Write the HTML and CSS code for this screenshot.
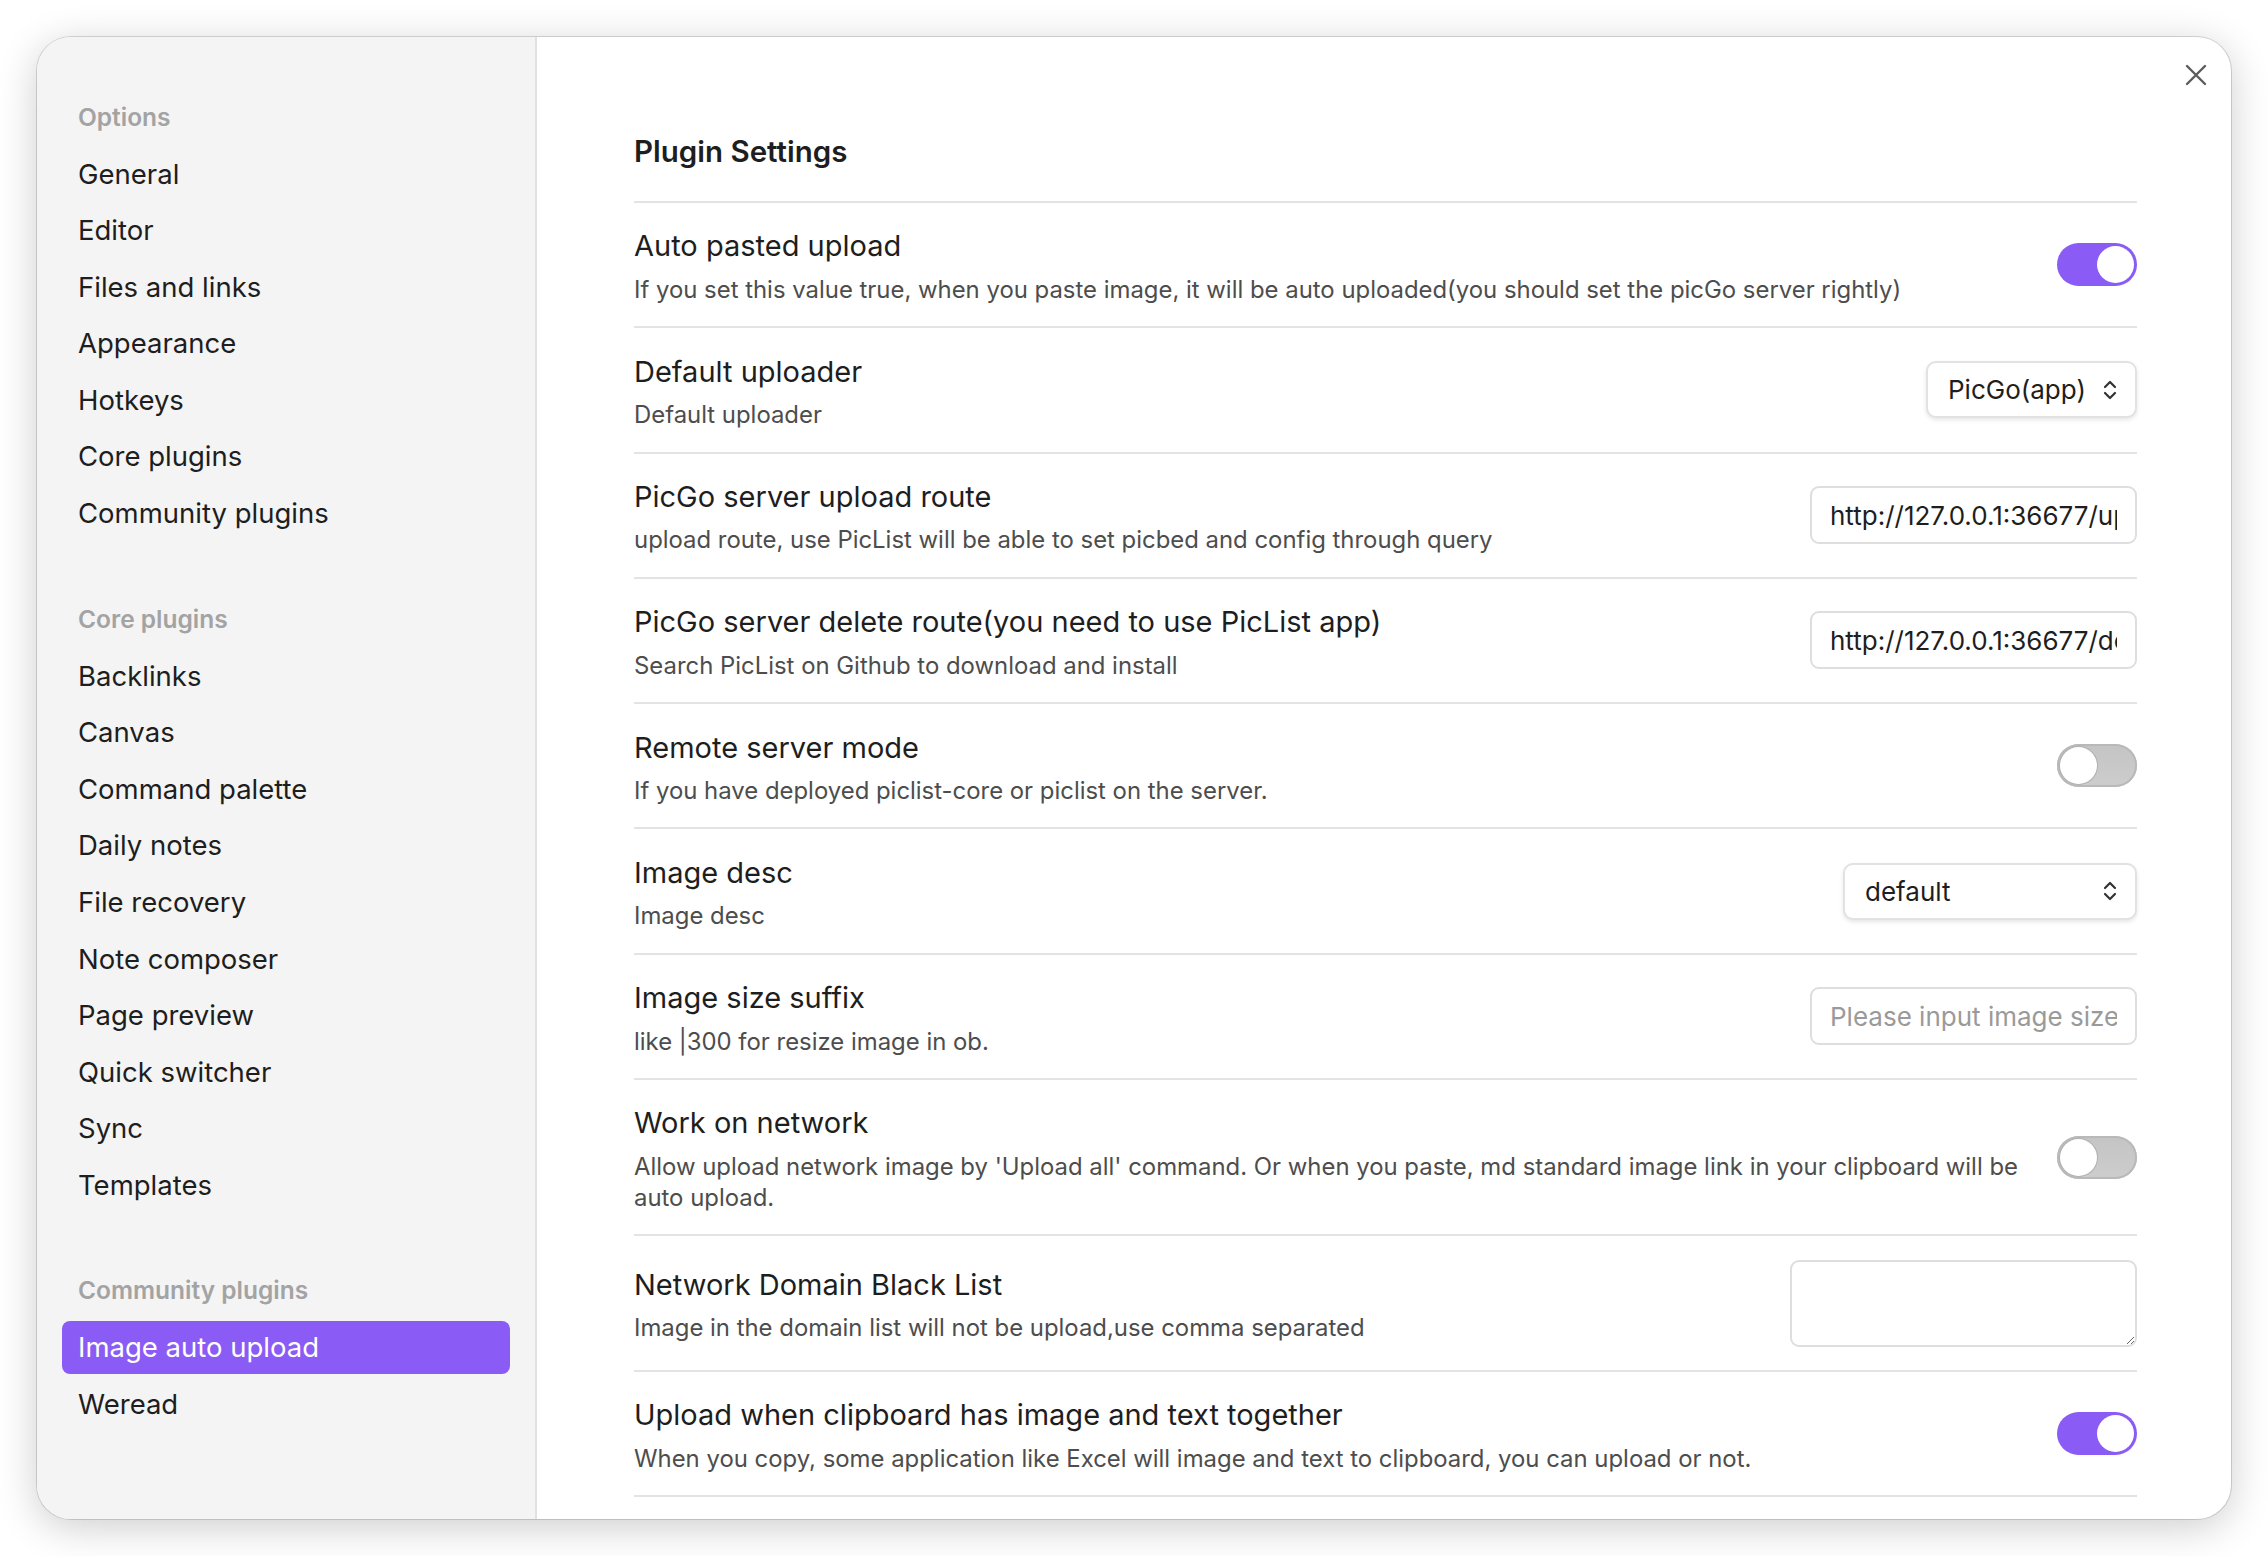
FILE: index.html
```html
<!DOCTYPE html>
<html lang="en">
<head>
  <meta charset="UTF-8" />
  <title>Settings</title>
  <link rel="stylesheet" href="styles.css">
</head>
<body>
  <div class="modal">
    <nav class="sidebar">
      <div class="nav-group">
        <div class="nav-title">Options</div>
        <div class="nav-item">General</div>
        <div class="nav-item">Editor</div>
        <div class="nav-item">Files and links</div>
        <div class="nav-item">Appearance</div>
        <div class="nav-item">Hotkeys</div>
        <div class="nav-item">Core plugins</div>
        <div class="nav-item">Community plugins</div>
      </div>
      <div class="nav-group">
        <div class="nav-title">Core plugins</div>
        <div class="nav-item">Backlinks</div>
        <div class="nav-item">Canvas</div>
        <div class="nav-item">Command palette</div>
        <div class="nav-item">Daily notes</div>
        <div class="nav-item">File recovery</div>
        <div class="nav-item">Note composer</div>
        <div class="nav-item">Page preview</div>
        <div class="nav-item">Quick switcher</div>
        <div class="nav-item">Sync</div>
        <div class="nav-item">Templates</div>
      </div>
      <div class="nav-group">
        <div class="nav-title">Community plugins</div>
        <div class="nav-item active">Image auto upload</div>
        <div class="nav-item">Weread</div>
      </div>
    </nav>

    <main class="content">
      <button class="close" aria-label="Close">
        <svg width="22" height="22" viewBox="0 0 22 22"><path d="M2 2 L20 20 M20 2 L2 20" stroke="#5c5c5c" stroke-width="2.4" stroke-linecap="round" fill="none"/></svg>
      </button>

      <h2 class="page-title">Plugin Settings</h2>

      <div class="setting">
        <div class="info">
          <div class="name">Auto pasted upload</div>
          <div class="desc">If you set this value true, when you paste image, it will be auto uploaded(you should set the picGo server rightly)</div>
        </div>
        <span class="toggle on"><span class="knob"></span></span>
      </div>

      <div class="setting">
        <div class="info">
          <div class="name">Default uploader</div>
          <div class="desc">Default uploader</div>
        </div>
        <div class="dropdown uploader">
          <span>PicGo(app)</span>
          <svg class="chevron" width="14" height="20" viewBox="0 0 14 20"><path d="M2 7 L7 2 L12 7 M2 13 L7 18 L12 13" stroke="#333" stroke-width="2.2" stroke-linecap="round" stroke-linejoin="round" fill="none"/></svg>
        </div>
      </div>

      <div class="setting">
        <div class="info">
          <div class="name">PicGo server upload route</div>
          <div class="desc">upload route, use PicList will be able to set picbed and config through query</div>
        </div>
        <input class="text-input" type="text" value="http://127.0.0.1:36677/upload" />
      </div>

      <div class="setting">
        <div class="info">
          <div class="name">PicGo server delete route(you need to use PicList app)</div>
          <div class="desc">Search PicList on Github to download and install</div>
        </div>
        <input class="text-input" type="text" value="http://127.0.0.1:36677/delete" />
      </div>

      <div class="setting">
        <div class="info">
          <div class="name">Remote server mode</div>
          <div class="desc">If you have deployed piclist-core or piclist on the server.</div>
        </div>
        <span class="toggle"><span class="knob"></span></span>
      </div>

      <div class="setting">
        <div class="info">
          <div class="name">Image desc</div>
          <div class="desc">Image desc</div>
        </div>
        <div class="dropdown desc-mode">
          <span>default</span>
          <svg class="chevron" width="14" height="20" viewBox="0 0 14 20"><path d="M2 7 L7 2 L12 7 M2 13 L7 18 L12 13" stroke="#333" stroke-width="2.2" stroke-linecap="round" stroke-linejoin="round" fill="none"/></svg>
        </div>
      </div>

      <div class="setting">
        <div class="info">
          <div class="name">Image size suffix</div>
          <div class="desc">like |300 for resize image in ob.</div>
        </div>
        <input class="text-input" type="text" placeholder="Please input image size" />
      </div>

      <div class="setting">
        <div class="info">
          <div class="name">Work on network</div>
          <div class="desc">Allow upload network image by 'Upload all' command. Or when you paste, md standard image link in your clipboard will be auto upload.</div>
        </div>
        <span class="toggle"><span class="knob"></span></span>
      </div>

      <div class="setting">
        <div class="info">
          <div class="name">Network Domain Black List</div>
          <div class="desc">Image in the domain list will not be upload,use comma separated</div>
        </div>
        <textarea class="text-area"></textarea>
      </div>

      <div class="setting last">
        <div class="info">
          <div class="name">Upload when clipboard has image and text together</div>
          <div class="desc">When you copy, some application like Excel will image and text to clipboard, you can upload or not.</div>
        </div>
        <span class="toggle on"><span class="knob"></span></span>
      </div>
    </main>
  </div>
</body>
</html>
```

FILE: styles.css
```css
html, body {
  height: 100%;
}

body {
  margin: 0;
  background: #ffffff;
  font-family: Inter, 'Noto Sans', sans-serif;
  color: #222222;
}

.modal {
  box-sizing: border-box;
  height: calc(100% - 74px);
  margin: 37px;
  display: flex;
  border-radius: 34px;
  overflow: hidden;
  background: #ffffff;
  box-shadow: 0 0 0 1px rgba(0, 0, 0, 0.14), 0 8px 40px rgba(0, 0, 0, 0.2);
}

/* left navigation */
.sidebar {
  box-sizing: border-box;
  width: 500px;
  flex-shrink: 0;
  padding: 59.5px 25px 0;
  background: #f4f4f4;
  border-right: 2px solid #e1e1e1;
}

.nav-group + .nav-group {
  margin-top: 58.5px;
}

.nav-title {
  height: 41px;
  line-height: 41px;
  margin-bottom: 10px;
  padding-left: 16px;
  font-size: 24.5px;
  font-weight: 600;
  color: #a3a3a3;
}

.nav-item {
  height: 53px;
  line-height: 53px;
  margin-bottom: 3.6px;
  padding-left: 16px;
  border-radius: 8px;
  font-size: 27.5px;
  color: #1e1e1e;
}

.nav-item.active {
  background: #8a5cf5;
  color: #ffffff;
}

/* settings pane */
.content {
  position: relative;
  flex: 1;
  padding: 93px 94px 0 97px;
  overflow: hidden;
}

.close {
  position: absolute;
  top: 18px;
  right: 15px;
  width: 40px;
  height: 40px;
  padding: 0;
  border: none;
  background: none;
  display: flex;
  align-items: center;
  justify-content: center;
}

.page-title {
  margin: 0 0 31px;
  height: 40px;
  line-height: 42px;
  font-size: 29.5px;
  font-weight: 600;
  color: #1e1e1e;
}

.setting {
  display: flex;
  align-items: center;
  gap: 32px;
  padding: 21.4px 0;
  border-top: 2px solid #e3e3e3;
}

.setting.last {
  border-bottom: 2px solid #e3e3e3;
}

.info {
  flex: 1;
}

.name {
  line-height: 43px;
  font-size: 29px;
  color: #1e1e1e;
}

.desc {
  margin-top: 6.5px;
  line-height: 31px;
  font-size: 23.9px;
  color: #4d4d4d;
}

/* controls */
.toggle {
  position: relative;
  flex-shrink: 0;
  width: 80px;
  height: 43px;
  border-radius: 22px;
  background: linear-gradient(#c4c4c4, #cdcdcd);
  box-shadow: inset 0 0 0 2px #b9b9b9;
}

.toggle .knob {
  position: absolute;
  top: 3px;
  left: 3px;
  width: 37px;
  height: 37px;
  border-radius: 50%;
  background: #ffffff;
  box-shadow: 0 0 0 1px #b0b0b0;
}

.toggle.on {
  background: #8a5cf5;
  box-shadow: none;
}

.toggle.on .knob {
  left: 40px;
  box-shadow: none;
}

.dropdown {
  box-sizing: border-box;
  flex-shrink: 0;
  height: 57px;
  padding: 0 18px 0 20px;
  display: flex;
  align-items: center;
  justify-content: space-between;
  border: 2px solid #e2e2e2;
  border-radius: 10px;
  background: #ffffff;
  box-shadow: 0 2px 4px rgba(0, 0, 0, 0.1);
  font-size: 26px;
  color: #1e1e1e;
}

.dropdown.uploader {
  width: 211px;
}

.dropdown.desc-mode {
  width: 294px;
}

.text-input {
  box-sizing: border-box;
  flex-shrink: 0;
  width: 327px;
  height: 58px;
  padding: 0 18px;
  border: 2px solid #dedede;
  border-radius: 9px;
  font-family: Inter, 'Noto Sans', sans-serif;
  font-size: 26px;
  color: #1e1e1e;
  outline: none;
}

.text-input::placeholder {
  color: #9a9a9a;
}

.text-area {
  box-sizing: border-box;
  flex-shrink: 0;
  width: 347px;
  height: 87px;
  margin: 2px 0;
  border: 2px solid #dedede;
  border-radius: 9px;
  outline: none;
}
```
